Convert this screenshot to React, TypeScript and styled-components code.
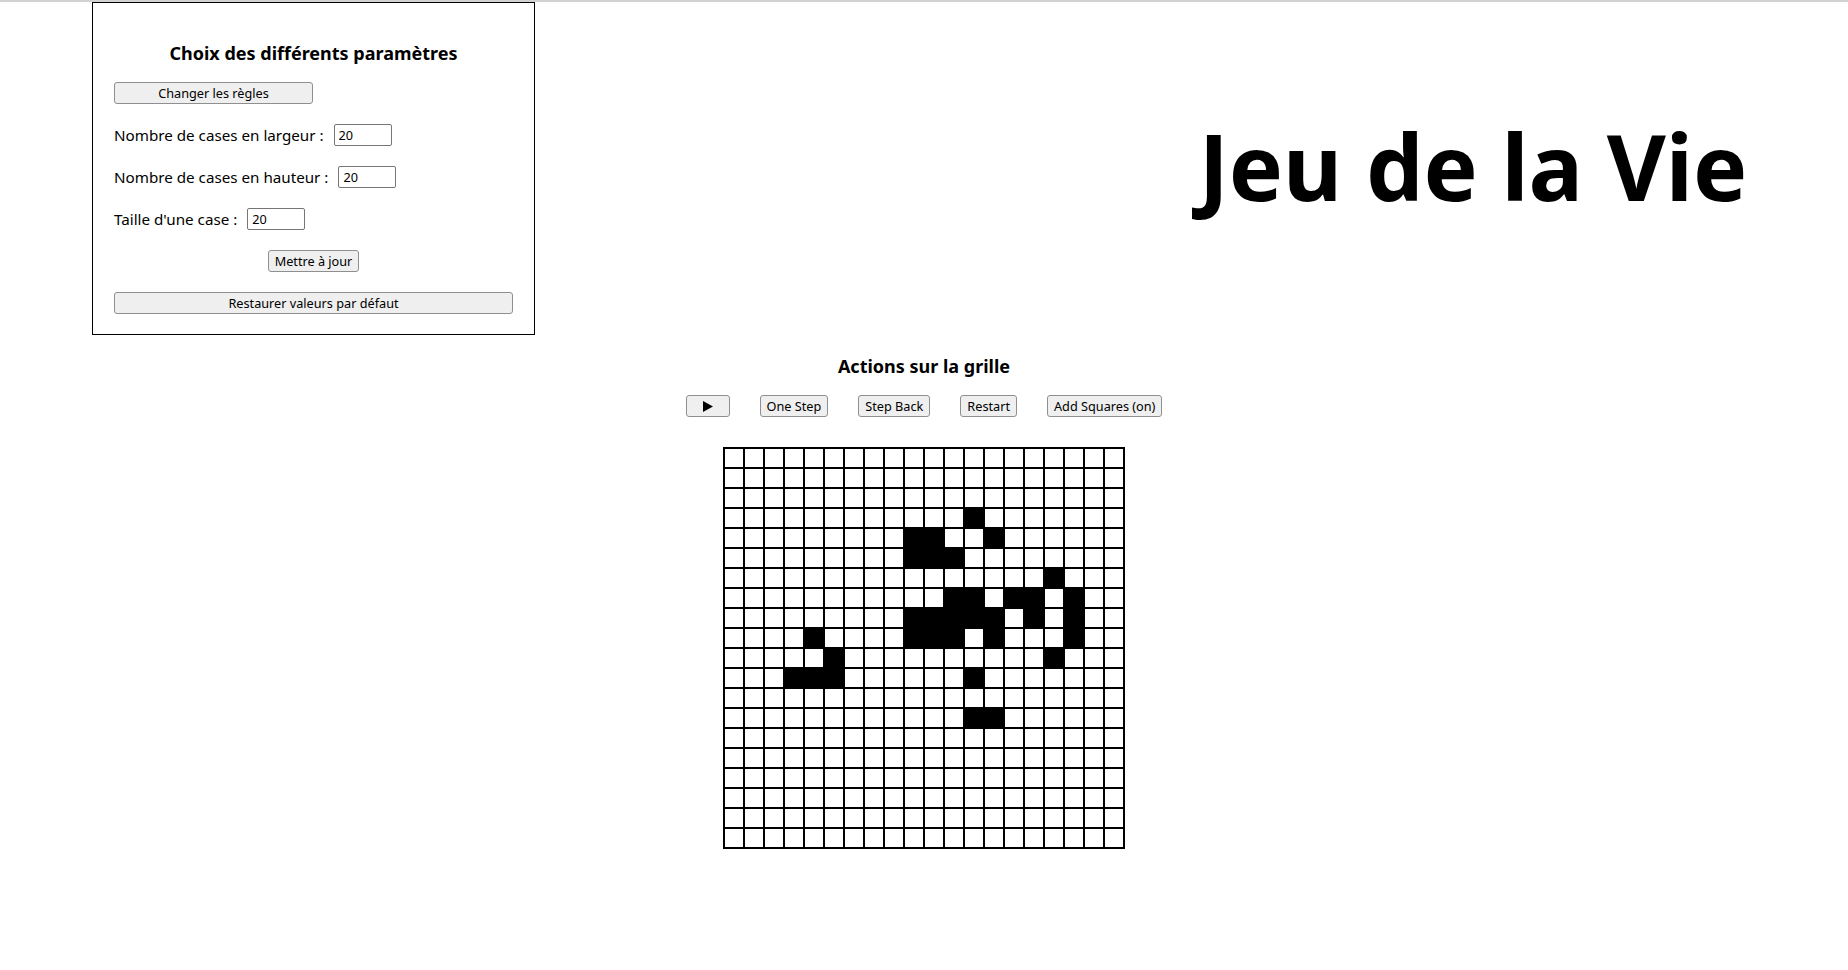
import React, {useState} from 'react';
import styled, {createGlobalStyle} from 'styled-components';

const GlobalStyle = createGlobalStyle`
  body {
    margin: 0;
    background: #fff;
    color: #000;
    font-family: 'Noto Sans', 'Open Sans', sans-serif;
  }
`;

const Page = styled.div`
  border-top: 2px solid #d2d2d2;
  min-height: 968px;
`;

const Header = styled.div`
  display: flex;
  align-items: flex-start;
  padding-left: 92px;
`;

const Panel = styled.div`
  width: 443px;
  box-sizing: border-box;
  border: 1px solid #000;
  padding: 38px 21px 20px;
  display: flex;
  flex-direction: column;
  gap: 20px;
`;

const PanelTitle = styled.h3`
  margin: 0 0 -3px;
  font-size: 18px;
  font-weight: 700;
  text-align: center;
`;

const TitleBox = styled.div`
  flex: 1;
  display: flex;
  justify-content: center;
  padding-left: 563px;
`;

const BigTitle = styled.h1`
  margin: 102px 0 0;
  font-size: 91px;
  font-weight: 700;
  white-space: nowrap;
`;

const Button = styled.button<{$width?: string; $center?: boolean}>`
  height: 22px;
  box-sizing: border-box;
  width: ${(p) => p.$width || 'auto'};
  align-self: ${(p) => (p.$center ? 'center' : 'flex-start')};
  padding: 0 6px;
  font-family: 'Noto Sans', 'Open Sans', sans-serif;
  font-size: 12.7px;
  white-space: nowrap;
  color: #000;
  background: #efefef;
  border: 1px solid #8f8f8f;
  border-radius: 3px;
  display: inline-flex;
  align-items: center;
  justify-content: center;
`;

const Field = styled.label`
  display: flex;
  align-items: center;
  gap: 10px;
  height: 22px;
  font-size: 15.2px;
`;

const NumberInput = styled.input`
  width: 58px;
  height: 22px;
  box-sizing: border-box;
  padding: 1px 4px;
  font-family: 'Noto Sans', 'Open Sans', sans-serif;
  font-size: 12.7px;
  border: 1px solid #767676;
  border-radius: 2px;
`;

const Actions = styled.section`
  display: flex;
  flex-direction: column;
  align-items: center;
  margin-top: 19px;
`;

const SectionTitle = styled.h3`
  margin: 0 0 17px;
  font-size: 18px;
  font-weight: 700;
`;

const Toolbar = styled.div`
  display: flex;
  gap: 30px;
`;

const Grid = styled.div`
  margin-top: 30px;
  display: grid;
  grid-template-columns: repeat(20, 18px);
  grid-auto-rows: 18px;
  gap: 2px;
  padding: 2px;
  background: #000;
`;

const Cell = styled.div<{$alive: boolean}>`
  background: ${(p) => (p.$alive ? '#000' : '#fff')};
  margin: ${(p) => (p.$alive ? '-1px' : '0')};
`;

const LIVE: Array<[number, number]> = [
  [3, 12],
  [4, 9], [4, 10], [4, 13],
  [5, 9], [5, 10], [5, 11],
  [6, 16],
  [7, 11], [7, 12], [7, 14], [7, 15], [7, 17],
  [8, 9], [8, 10], [8, 11], [8, 12], [8, 13], [8, 15], [8, 17],
  [9, 4], [9, 9], [9, 10], [9, 11], [9, 13], [9, 17],
  [10, 5], [10, 16],
  [11, 3], [11, 4], [11, 5], [11, 12],
  [13, 12], [13, 13],
];

const PlayIcon = () => (
  <svg width="10" height="11" viewBox="0 0 10 11">
    <polygon points="0,0 10,5.5 0,11" fill="#000" />
  </svg>
);

function App() {
  const [alive] = useState(() => new Set(LIVE.map(([r, c]) => r * 20 + c)));
  const [width, setWidth] = useState('20');
  const [height, setHeight] = useState('20');
  const [size, setSize] = useState('20');

  return (
    <Page>
      <GlobalStyle />
      <Header>
        <Panel>
          <PanelTitle>Choix des différents paramètres</PanelTitle>
          <Button $width="199px">Changer les règles</Button>
          <Field>
            Nombre de cases en largeur :
            <NumberInput value={width} onChange={(e) => setWidth(e.target.value)} />
          </Field>
          <Field>
            Nombre de cases en hauteur :
            <NumberInput value={height} onChange={(e) => setHeight(e.target.value)} />
          </Field>
          <Field>
            Taille d'une case :
            <NumberInput value={size} onChange={(e) => setSize(e.target.value)} />
          </Field>
          <Button $center>Mettre à jour</Button>
          <Button $width="100%">Restaurer valeurs par défaut</Button>
        </Panel>
        <TitleBox>
          <BigTitle>Jeu de la Vie</BigTitle>
        </TitleBox>
      </Header>
      <Actions>
        <SectionTitle>Actions sur la grille</SectionTitle>
        <Toolbar>
          <Button $width="44px"><PlayIcon /></Button>
          <Button>One Step</Button>
          <Button>Step Back</Button>
          <Button>Restart</Button>
          <Button>Add Squares (on)</Button>
        </Toolbar>
        <Grid>
          {Array.from({length: 400}, (_, i) => (
            <Cell key={i} $alive={alive.has(i)} />
          ))}
        </Grid>
      </Actions>
    </Page>
  );
}

export default App;
